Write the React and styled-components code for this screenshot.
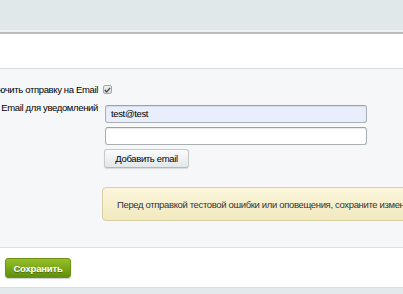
import React from "react";
import styled, { createGlobalStyle } from "styled-components";

const Global = createGlobalStyle`
  html, body { margin: 0; padding: 0; }
  body {
    width: 403px;
    height: 294px;
    overflow: hidden;
    background: #e2e9eb;
    font-family: "Liberation Sans", Arial, sans-serif;
    font-size: 9.5px;
    letter-spacing: -0.35px;
    color: #000;
  }
`;

const Page = styled.div`
  width: 403px;
  height: 294px;
  display: flex;
  flex-direction: column;
  overflow: hidden;
`;

const TopBar = styled.div`
  height: 30px;
  flex: none;
  background: #e1e8ea;
  border-bottom: 2px solid #eef2f3;
  box-shadow: 0 2px 0 #b8bcbe;
  margin-bottom: 2px;
`;

const Head = styled.div`
  height: 34px;
  flex: none;
  background: #fff;
  border-bottom: 1px solid #d8dcde;
`;

const Content = styled.div`
  height: 179px;
  flex: none;
  background: #f5f7f8;
  border-bottom: 1px solid #dbe0e2;
  padding-top: 15px;
  box-sizing: border-box;
`;

const Form = styled.div`
  display: grid;
  grid-template-columns: 201px 1fr;
  margin-left: -98px;
`;

const Label = styled.div`
  text-align: right;
  padding-right: 5px;
  white-space: nowrap;
  line-height: 12px;
  padding-top: ${(p) => p.$top || 0}px;
`;

const Field = styled.div`
  display: flex;
  flex-direction: column;
  align-items: flex-start;
  gap: ${(p) => p.$gap || 0}px;
  padding-top: ${(p) => p.$top || 0}px;
`;

const Checkbox = styled.span`
  width: 9px;
  height: 9px;
  margin-top: 1px;
  box-sizing: border-box;
  border: 1px solid #a4a9ab;
  border-radius: 2px;
  background: linear-gradient(#eef0f0, #d6dadb);
  display: flex;
  align-items: center;
  justify-content: center;
`;

const Input = styled.div`
  width: 262px;
  height: 18px;
  margin-left: 2px;
  box-sizing: border-box;
  border: 1px solid #a9b0b4;
  border-top-color: #9aa1a5;
  border-radius: 3px;
  background: ${(p) => (p.$filled ? "#e8eefb" : "#fff")};
  box-shadow: inset 0 1px 1px rgba(0, 0, 0, 0.08);
  padding: 0 5px;
  line-height: 16px;
  color: #000;
`;

const SmallButton = styled.button`
  margin-left: 1px;
  height: 19px;
  width: 85px;
  padding: 0;
  font-family: inherit;
  font-size: 9.5px;
  letter-spacing: -0.35px;
  color: #000;
  border: 1px solid #c3c9cc;
  border-bottom-color: #b2b9bc;
  border-radius: 3px;
  background: linear-gradient(#fbfcfc, #e2e7e9);
  box-shadow: 0 1px 1px rgba(0, 0, 0, 0.12);
`;

const Note = styled.div`
  grid-column: 2;
  margin-top: 19px;
  margin-left: -1px;
  height: 34px;
  width: 330px;
  box-sizing: border-box;
  border: 1px solid #d9d1a3;
  border-radius: 4px;
  background: linear-gradient(#fbf6dc, #f2e9bf);
  display: flex;
  align-items: center;
  padding-left: 14px;
  white-space: nowrap;
  color: #333;
`;

const Footer = styled.div`
  height: 40px;
  flex: none;
  background: #fff;
  display: flex;
  align-items: flex-start;
  padding: 10px 0 0 5px;
  box-sizing: border-box;
  border-bottom: 1px solid #d9dfe1;
`;

const SaveButton = styled.button`
  height: 20px;
  width: 66px;
  padding: 0;
  font-family: inherit;
  font-size: 9.5px;
  letter-spacing: -0.2px;
  font-weight: bold;
  color: #fff;
  text-shadow: 0 1px 0 rgba(0, 0, 0, 0.3);
  border: 1px solid #6a9312;
  border-radius: 3px;
  background: linear-gradient(#97c029, #5f8f0b);
  box-shadow: 0 1px 1px rgba(0, 0, 0, 0.2);
`;

const Bottom = styled.div`
  flex: 1;
  background: #e3eaec;
`;

export default function App() {
  return (
    <Page>
      <Global />
      <TopBar />
      <Head />
      <Content>
        <Form>
          <Label>Включить отправку на Email</Label>
          <Field>
            <Checkbox>
              <svg width="7" height="6" viewBox="0 0 7 6">
                <path d="M0.8 3 L2.6 4.8 L6.2 0.8" fill="none" stroke="#3a3a3a" strokeWidth="1.2" />
              </svg>
            </Checkbox>
          </Field>
          <Label $top={6}>Email для уведомлений</Label>
          <Field $top={9} $gap={4}>
            <Input $filled>test@test</Input>
            <Input />
            <SmallButton>Добавить email</SmallButton>
          </Field>
          <Note>Перед отправкой тестовой ошибки или оповещения, сохраните изменения.</Note>
        </Form>
      </Content>
      <Footer>
        <SaveButton>Сохранить</SaveButton>
      </Footer>
      <Bottom />
    </Page>
  );
}
